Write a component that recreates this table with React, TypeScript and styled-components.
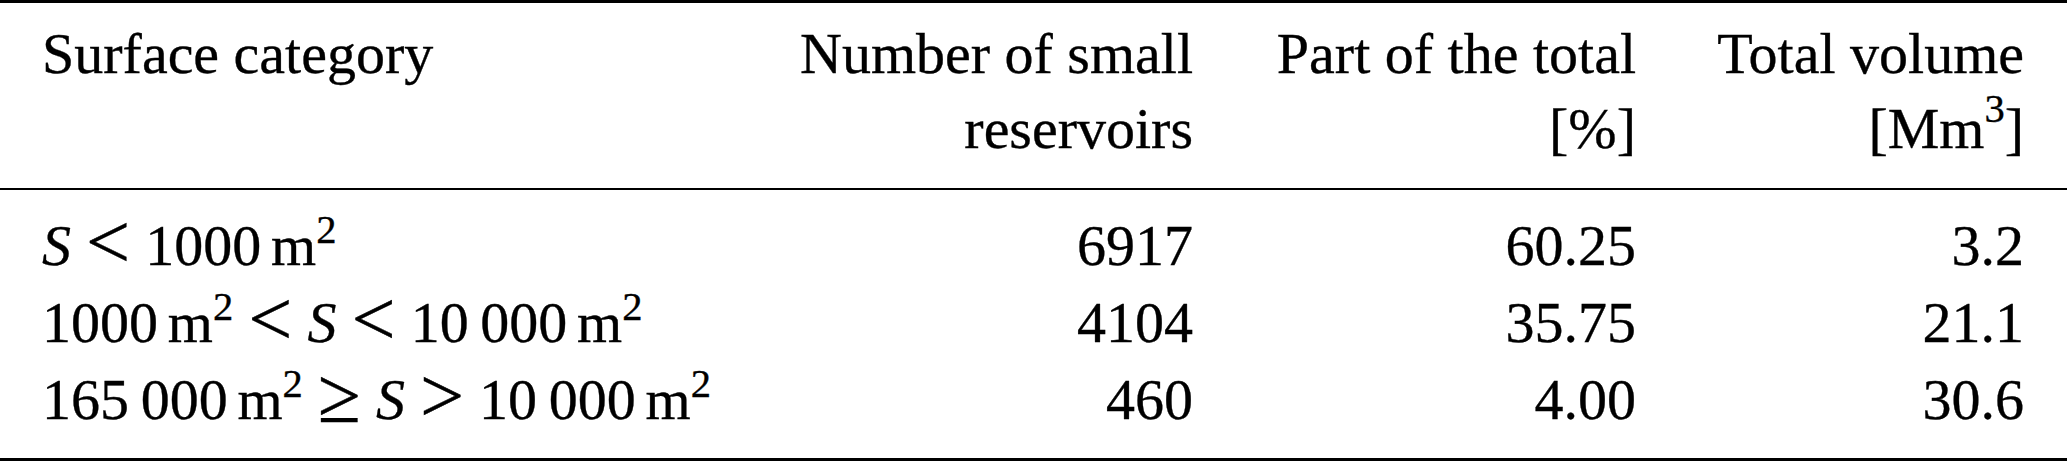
import * as React from "react";
import styled, { createGlobalStyle } from "styled-components";

const Global = createGlobalStyle`
  body {
    margin: 0;
    background: #fff;
    color: #000;
    font-family: "Liberation Serif", "Times New Roman", serif;
  }
`;

const Page = styled.div`
  width: 2067px;
  font-size: 58px;
  -webkit-text-stroke: 0.35px #000;
`;

const Rule = styled.div<{ $weight: number }>`
  height: ${(p) => p.$weight}px;
  background: #000;
`;

const Row = styled.div<{ $lh: number }>`
  display: grid;
  grid-template-columns: 1fr 393px 443px 388px;
  padding: 0 43px 0 42px;
  line-height: ${(p) => p.$lh}px;
`;

const Head = styled.div`
  padding: 13px 0 22px;
`;

const Body = styled.div`
  padding: 17px 0 20px;
`;

const Cell = styled.div<{ $right?: boolean }>`
  text-align: ${(p) => (p.$right ? "right" : "left")};
  white-space: nowrap;
`;

const Sup = styled.sup<{ $raise: number }>`
  font-size: 0.7em;
  line-height: 0;
  vertical-align: ${(p) => p.$raise}px;
`;

const Var = styled.i`
  font-style: italic;
`;

// math relation: TeX draws < > ≥ wider than the text font does
const Rel = styled.span`
  font-size: 1.35em;
  line-height: 0;
  margin: 0 15px;
  vertical-align: -3px;
`;

const Unit = styled.span`
  margin-left: 0.17em;
`;

const m2 = (
  <Unit>
    m<Sup $raise={22}>2</Sup>
  </Unit>
);

const rows = [
  {
    label: (
      <>
        <Var>S</Var>
        <Rel>&lt;</Rel>1000{m2}
      </>
    ),
    count: "6917",
    part: "60.25",
    volume: "3.2",
  },
  {
    label: (
      <>
        1000{m2}
        <Rel>&lt;</Rel>
        <Var>S</Var>
        <Rel>&lt;</Rel>10{"\u2009"}000{m2}
      </>
    ),
    count: "4104",
    part: "35.75",
    volume: "21.1",
  },
  {
    label: (
      <>
        165{"\u2009"}000{m2}
        <Rel>≥</Rel>
        <Var>S</Var>
        <Rel>&gt;</Rel>10{"\u2009"}000{m2}
      </>
    ),
    count: "460",
    part: "4.00",
    volume: "30.6",
  },
];

export default function App() {
  return (
    <Page>
      <Global />
      <Rule $weight={3} />
      <Head>
        <Row $lh={75}>
          <Cell>Surface category</Cell>
          <Cell $right>
            Number of small
            <br />
            reservoirs
          </Cell>
          <Cell $right>
            Part of the total
            <br />
            [%]
          </Cell>
          <Cell $right>
            Total volume
            <br />
            [Mm<Sup $raise={26}>3</Sup>]
          </Cell>
        </Row>
      </Head>
      <Rule $weight={2} />
      <Body>
        {rows.map((r) => (
          <Row $lh={77} key={r.count}>
            <Cell>{r.label}</Cell>
            <Cell $right>{r.count}</Cell>
            <Cell $right>{r.part}</Cell>
            <Cell $right>{r.volume}</Cell>
          </Row>
        ))}
      </Body>
      <Rule $weight={3} />
    </Page>
  );
}
